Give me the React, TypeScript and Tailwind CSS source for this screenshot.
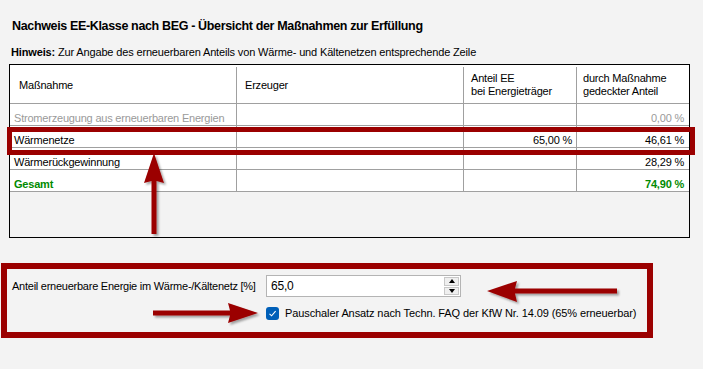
import React from "react";

type Row = {
  name: string;
  ee?: string;
  share: string;
  tone: "muted" | "normal" | "total";
};

const rows: Row[] = [
  { name: "Stromerzeugung aus erneuerbaren Energien", share: "0,00 %", tone: "muted" },
  { name: "Wärmenetze", ee: "65,00 %", share: "46,61 %", tone: "normal" },
  { name: "Wärmerückgewinnung", share: "28,29 %", tone: "normal" },
  { name: "Gesamt", share: "74,90 %", tone: "total" },
];

const toneClass = {
  muted: "text-[#9a9a9a]",
  normal: "text-black",
  total: "text-[#008a00] font-bold",
} as const;

// Annotation arrows drawn over the dialog
function Arrows() {
  return (
    <svg
      className="pointer-events-none absolute left-0 top-0"
      width={703}
      height={369}
      viewBox="0 0 703 369"
    >
      <defs>
        <filter id="sh" x="-20%" y="-20%" width="140%" height="140%">
          <feDropShadow dx="2" dy="2" stdDeviation="1.3" floodColor="#000" floodOpacity="0.35" />
        </filter>
      </defs>
      <g fill="#9b0000" filter="url(#sh)">
        <polygon points="154,153 164,183 156.5,181 156.5,234 151.5,234 151.5,181 144,183" />
        <polygon points="487,291 517,281 515,288.5 617,288.5 617,293.5 515,293.5 517,302" />
        <polygon points="153,310.5 230,310.5 228,303 258,313 228,323 230,315.5 153,315.5" />
      </g>
    </svg>
  );
}

export default function App() {
  return (
    <div
      className="relative h-[369px] w-[703px] overflow-hidden bg-[#f3f3f3] text-[11px] tracking-[-0.2px] text-black"
      style={{ fontFamily: '"Liberation Sans", Arial, sans-serif' }}
    >
      {/* Title */}
      <h1 className="pl-3 pt-[19px] text-[12.5px] font-bold leading-[15px] tracking-[-0.35px]">
        Nachweis EE-Klasse nach BEG - Übersicht der Maßnahmen zur Erfüllung
      </h1>
      <p className="mt-[11px] pl-[11px] leading-[14px] tracking-[-0.15px]">
        <span className="font-bold">Hinweis:</span> Zur Angabe des erneuerbaren Anteils von Wärme- und
        Kältenetzen entsprechende Zeile
      </p>

      {/* Table */}
      <div className="ml-[9px] mt-[5px] h-[174px] w-[681px] border border-black bg-[#f3f3f3]">
        <div className="flex h-[39px] border-b border-[#a0a0a0] bg-white pt-[2px] leading-[13px]">
          <div className="flex w-[227px] items-center border-r border-[#a0a0a0] pl-[9px]">Maßnahme</div>
          <div className="flex w-[227px] items-center border-r border-[#a0a0a0] pl-[8px]">Erzeuger</div>
          <div className="flex w-[113px] flex-col justify-center border-r border-[#a0a0a0] pl-[7px]">
            <span>Anteil EE</span>
            <span>bei Energieträger</span>
          </div>
          <div className="flex w-[112px] flex-col justify-center pl-[6px]">
            <span>durch Maßnahme</span>
            <span>gedeckter Anteil</span>
          </div>
        </div>
        {rows.map((r) => (
          <div
            key={r.name}
            className={`flex h-[22px] border-b border-[#a0a0a0] bg-white leading-[14px] ${toneClass[r.tone]}`}
          >
            <div className="flex w-[227px] items-end border-r border-[#a0a0a0] pl-[4px]">{r.name}</div>
            <div className="w-[227px] border-r border-[#a0a0a0]" />
            <div className="flex w-[113px] items-end justify-end border-r border-[#a0a0a0] pr-[4px]">
              {r.ee}
            </div>
            <div className="flex w-[112px] items-end justify-end pr-[5px]">{r.share}</div>
          </div>
        ))}
      </div>

      {/* Renewable share input */}
      <div className="mt-[37px] flex items-center">
        <label className="w-[266px] pl-3 tracking-[-0.25px]">
          Anteil erneuerbare Energie im Wärme-/Kältenetz [%]
        </label>
        <div className="flex h-[22px] w-[195px] items-center border border-[#b4b4b4] bg-white">
          <span className="flex-1 pl-[4px] text-[12px]">65,0</span>
          <div className="mr-[1px] flex h-[18px] w-[15px] flex-col gap-[1px]">
            <button className="flex flex-1 items-center justify-center border border-[#c8c8c8] bg-[#efefef]">
              <span className="h-0 w-0 border-x-[3.5px] border-b-[4px] border-x-transparent border-b-black" />
            </button>
            <button className="flex flex-1 items-center justify-center border border-[#c8c8c8] bg-[#efefef]">
              <span className="h-0 w-0 border-x-[3.5px] border-t-[4px] border-x-transparent border-t-black" />
            </button>
          </div>
        </div>
      </div>
      <div className="mt-[8px] flex items-center pl-[266px]">
        <span className="flex h-[13px] w-[13px] items-center justify-center rounded-[3px] bg-[#005fb8]">
          <svg width="9" height="9" viewBox="0 0 9 9">
            <path d="M1.5 4.8 L3.6 6.8 L7.6 2.2" fill="none" stroke="#fff" strokeWidth="1.1" />
          </svg>
        </span>
        <span className="ml-[6px] tracking-[-0.1px]">
          Pauschaler Ansatz nach Techn. FAQ der KfW Nr. 14.09 (65% erneuerbar)
        </span>
      </div>

      {/* Red highlight frames */}
      <div className="pointer-events-none absolute left-[7px] top-[127px] h-[28px] w-[688px] border-[5px] border-[#9b0000]" />
      <div className="pointer-events-none absolute left-[1px] top-[263px] h-[75px] w-[652px] border-[6px] border-[#9b0000]" />

      <Arrows />
    </div>
  );
}
